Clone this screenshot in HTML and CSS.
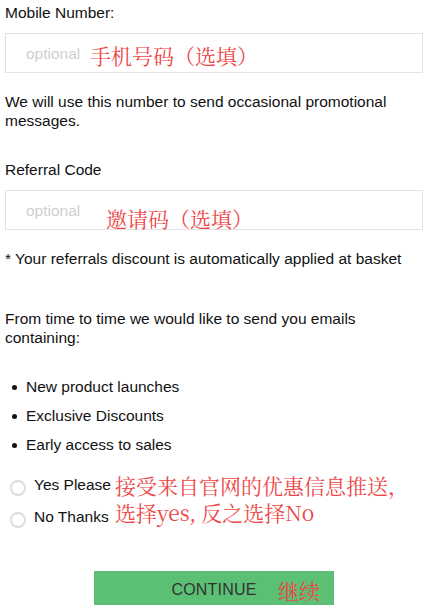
FILE: index.html
```html
<!DOCTYPE html>
<html lang="en">
<head>
<meta charset="utf-8">
<title>Sign up</title>
<link rel="stylesheet" href="styles.css">
</head>
<body>
<div class="form">
  <div class="label label-first">Mobile Number:</div>
  <div class="field">
    <span class="placeholder">optional</span>
    <span class="note note-mobile">手机号码（选填）</span>
  </div>
  <p class="text text-after-field">We will use this number to send occasional promotional messages.</p>

  <div class="label label-referral">Referral Code</div>
  <div class="field">
    <span class="placeholder">optional</span>
    <span class="note note-referral">邀请码（选填）</span>
  </div>
  <p class="text text-after-field">* Your referrals discount is automatically applied at basket</p>

  <p class="text text-emails">From time to time we would like to send you emails containing:</p>

  <ul class="bullets">
    <li>New product launches</li>
    <li>Exclusive Discounts</li>
    <li>Early access to sales</li>
  </ul>

  <div class="radios">
    <label class="radio-row"><span class="radio"></span><span>Yes Please</span></label>
    <label class="radio-row"><span class="radio"></span><span>No Thanks</span></label>
    <div class="note note-radios">
      <span class="note-line">接受来自官网的优惠信息推送，</span>
      <span class="note-line">选择yes, 反之选择No</span>
    </div>
  </div>

  <div class="button">
    <span class="button-text">CONTINUE</span>
    <span class="note note-button">继续</span>
  </div>
</div>
</body>
</html>
```
FILE: styles.css
```css
html, body {
  margin: 0;
  padding: 0;
  background: #ffffff;
}

body {
  font-family: "Liberation Sans", Arial, sans-serif;
  font-size: 15.5px;
  line-height: 19px;
  color: #111111;
}

.form {
  padding: 0 3px 0 5px;
  display: flex;
  flex-direction: column;
}

.label-first {
  margin-top: 3px;
}

.label-referral {
  margin-top: 30px;
}

.field {
  position: relative;
  margin-top: 11px;
  height: 40px;
  box-sizing: border-box;
  border: 1px solid #e2e2e2;
  display: flex;
  align-items: center;
  padding-left: 20px;
}

.placeholder {
  color: #cfcfcf;
}

.text {
  margin: 0;
}

.text-after-field {
  margin-top: 19px;
}

.text-emails {
  margin-top: 41px;
}

.bullets {
  list-style: none;
  margin: 30px 0 0 0;
  padding: 0;
  display: flex;
  flex-direction: column;
  gap: 10px;
}

.bullets li {
  display: flex;
  align-items: center;
}

.bullets li::before {
  content: "";
  width: 5px;
  height: 5px;
  border-radius: 50%;
  background: #111111;
  margin: 2px 9px 0 7px;
}

.radios {
  position: relative;
  margin-top: 21px;
  display: flex;
  flex-direction: column;
  gap: 11px;
}

.radio-row {
  display: flex;
  align-items: flex-start;
  gap: 8px;
}

.radio {
  width: 16px;
  height: 16px;
  box-sizing: border-box;
  border: 2px solid #dedede;
  border-radius: 50%;
  background: #ffffff;
  margin: 5px 0 0 5px;
}

.note {
  position: absolute;
  font-family: "Noto Serif CJK SC", "Noto Sans CJK SC", serif;
  font-size: 21px;
  line-height: 21px;
  color: #ee4646;
  white-space: nowrap;
}

.note-mobile {
  top: 11px;
  left: 84px;
}

.note-referral {
  top: 17px;
  left: 100px;
}

.note-radios {
  top: 0;
  left: 110px;
  display: flex;
  flex-direction: column;
  gap: 6px;
  margin-top: 0;
}

.note-line {
  display: block;
  line-height: 21px;
}

.button {
  position: relative;
  margin: 43px auto 0 auto;
  width: 240px;
  height: 37px;
  background: #5bbf74;
  display: flex;
  align-items: center;
  justify-content: center;
}

.button-text {
  font-size: 16px;
  color: #333333;
  letter-spacing: 0.2px;
}

.note-button {
  top: 9px;
  left: 184px;
}
```
